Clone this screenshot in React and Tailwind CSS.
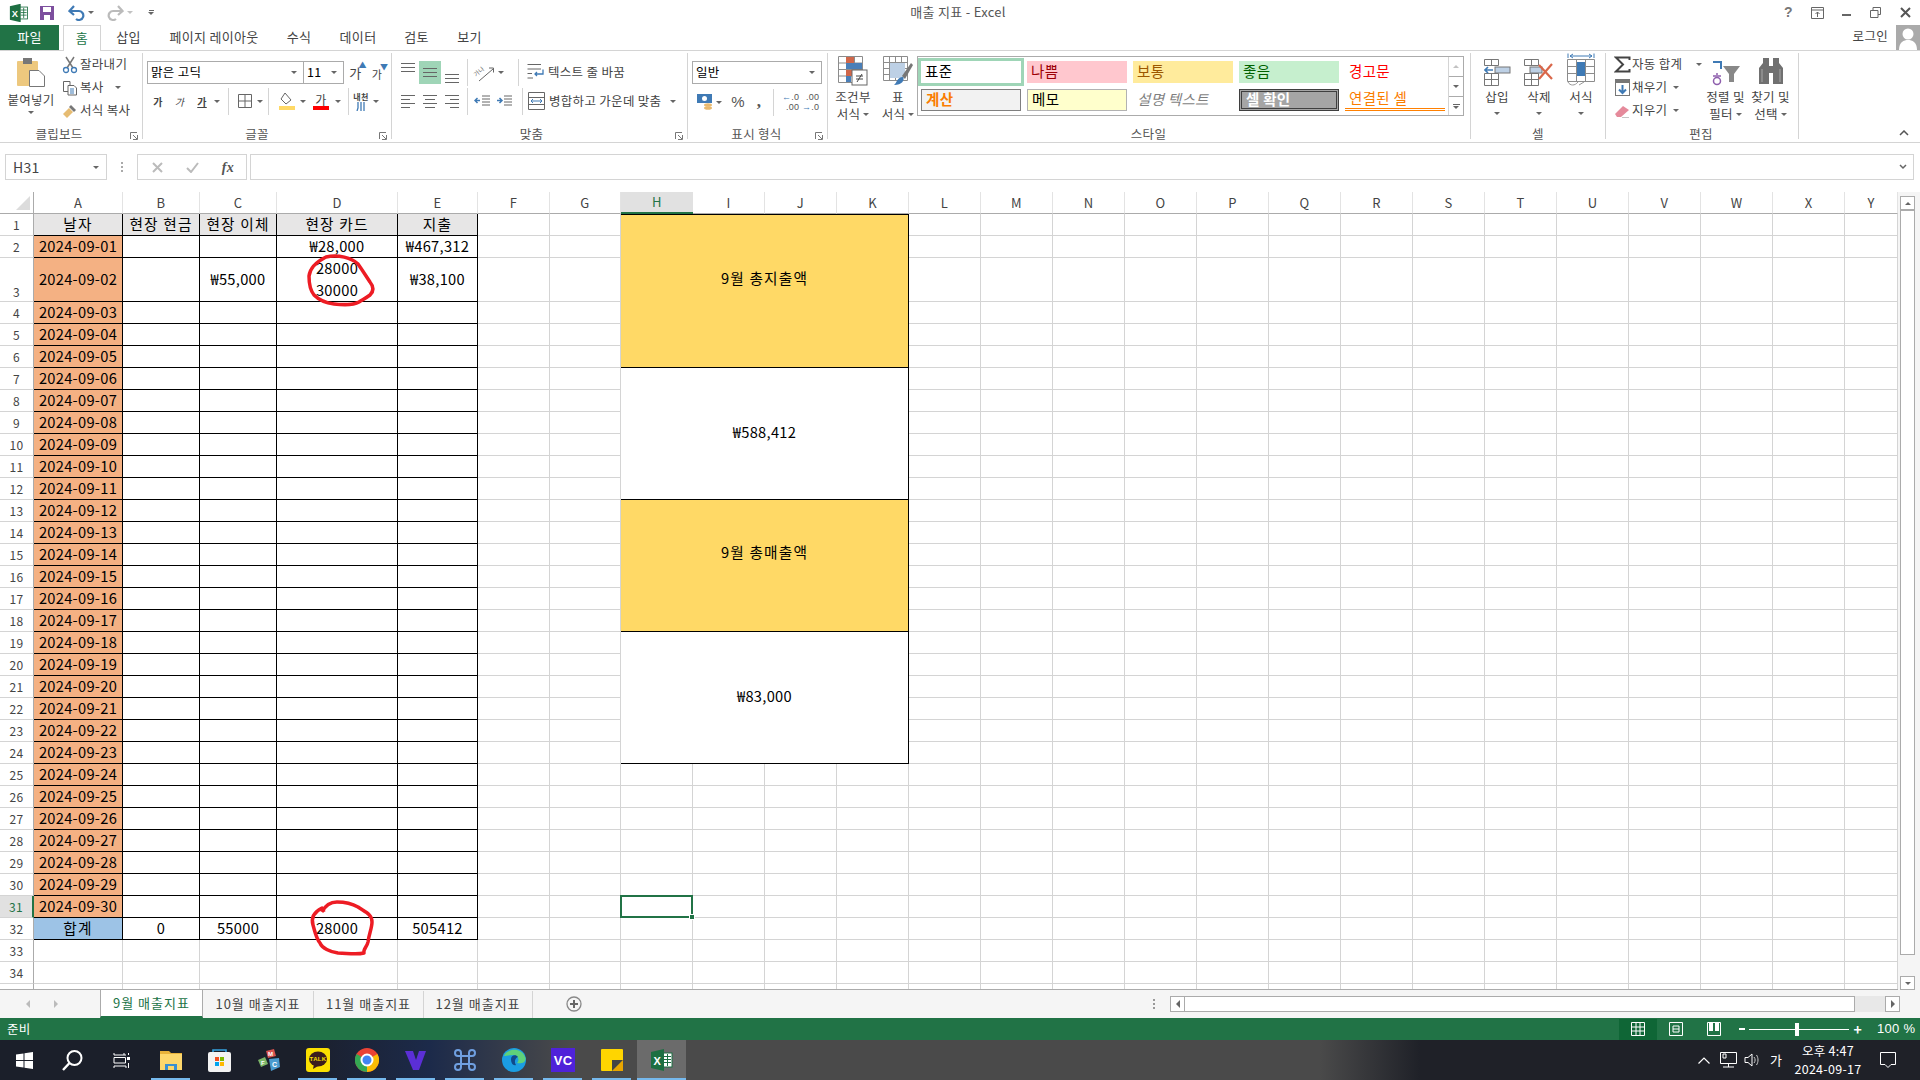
const BASE = "font-['Noto_Sans_CJK_KR','Noto_Sans',sans-serif] tracking-[.3px]";

function S({ w, h, children, className = "" }) {
  return (
    <svg width={w} height={h} viewBox={`0 0 ${w} ${h}`} className={`shrink-0 ${className}`}>
      {children}
    </svg>
  );
}

function Tri({ className = "" }) {
  return <span className={`inline-block h-0 w-0 shrink-0 border-x-[3px] border-t-[3px] border-x-transparent border-t-[#666] ${className}`} />;
}

function ExcelLogo() {
  return (
    <S w={22} h={22}>
      <rect x={10} y={4} width={11} height={14} fill="#fff" stroke="#1d6f42" />
      <path d="M13 7.5h7M13 10.5h7M13 13.5h7M16.5 5v12" stroke="#1d6f42" strokeWidth="1" />
      <path d="M0 3L13 0V22L0 19Z" fill="#1d6f42" />
      <text x="2.5" y="15.5" fontSize="11" fontWeight="700" fill="#fff" fontFamily="Liberation Sans">X</text>
    </S>
  );
}

function Sep({ className = "" }) {
  return <span className={`h-[27px] w-px shrink-0 bg-[#d4d4d4] ${className}`} />;
}

function Group({ width, label, launcher, children, bodyClass = "" }) {
  return (
    <div className={`relative flex h-[86px] shrink-0 flex-col border-r border-[#d4d4d4] ${width}`}>
      <div className={`h-[73px] shrink-0 ${bodyClass}`}>{children}</div>
      <div className="mt-[2px] h-[12px] shrink-0 text-center text-[12.5px] leading-[12px] text-[#555]">{label}</div>
      {launcher ? (
        <svg width="8" height="8" viewBox="0 0 8 8" className="absolute bottom-[-1px] right-[4px]">
          <path d="M0.5 7V.5H7M7.5 3V7.5H3M3 3L7 7" stroke="#777" fill="none" />
        </svg>
      ) : null}
    </div>
  );
}

function LargeBtn({ icon, lines, arrowBelow, width = "w-[42px]" }) {
  return (
    <div className={`flex shrink-0 flex-col items-center ${width}`}>
      <div className="flex h-[33px] shrink-0 items-end justify-center">{icon}</div>
      <div className="mt-[3px] flex h-[17px] shrink-0 items-center whitespace-nowrap text-[12.5px] text-[#444]">{lines[0]}</div>
      {lines[1] ? (
        <div className="flex h-[17px] shrink-0 items-center gap-[3px] whitespace-nowrap text-[12.5px] text-[#444]">
          {lines[1]} <Tri />
        </div>
      ) : null}
      {arrowBelow ? <div className="mt-[6px] flex h-[3px] shrink-0"><Tri /></div> : null}
    </div>
  );
}

function SmallRow({ icon, label, arrow, textClass = "w-[48px]" }) {
  return (
    <div className="flex h-[23px] items-center whitespace-nowrap text-[12.5px] text-[#444]">
      <span className="flex w-[20px] shrink-0 justify-center">{icon}</span>
      <span className={textClass}>{label}</span>
      {arrow ? <Tri className={arrow} /> : null}
    </div>
  );
}

function HLines({ rows, y0, gap, h = 20 }) {
  return (
    <S w={18} h={h}>
      {rows.map(([x, l], i) => (
        <rect key={i} x={x} y={y0 + i * gap} width={l} height={1} fill="#666" />
      ))}
    </S>
  );
}

const LINES_3 = [[2, 14], [2, 14], [2, 14]];

function ClipboardGroup() {
  return (
    <Group width="w-[143px]" label={<span className="pr-[24px]">클립보드</span>} launcher bodyClass="flex">
      <div className="flex w-[60px] flex-col items-center pl-[2px]">
        <div className="mt-[4px]">
          <S w={30} h={30}>
            <rect x={1} y={4} width={21} height={25} rx={1} fill="#edc87e" />
            <rect x={7} y={1} width={9} height={6} fill="#777" />
            <path d="M13.5 13.5H23L28.5 19V29.5H13.5Z" fill="#fff" stroke="#777" />
          </S>
        </div>
        <div className="mt-[5px] h-[16px] text-[12.5px] leading-[16px] text-[#444]">붙여넣기</div>
        <Tri className="mt-[3px]" />
      </div>
      <div>
        <SmallRow
          label="잘라내기"
          icon={
            <S w={16} h={18}>
              <path d="M4 1L11 12M12 1L5 12" stroke="#777" strokeWidth="1.5" />
              <circle cx="4" cy="14" r="2.5" fill="none" stroke="#3f7ab5" strokeWidth="1.3" />
              <circle cx="12" cy="14" r="2.5" fill="none" stroke="#3f7ab5" strokeWidth="1.3" />
            </S>
          }
        />
        <SmallRow
          label="복사"
          textClass="w-[35px]"
          arrow="ml-0"
          icon={
            <S w={16} h={16}>
              <path d="M1.5 1.5H8V11.5H1.5Z" fill="#fff" stroke="#666" />
              <path d="M6 5.5H12L14.5 8V15H6Z" fill="#fff" stroke="#666" />
              <path d="M8 9H12M8 11H12M8 13H12" stroke="#3f7ab5" />
            </S>
          }
        />
        <SmallRow
          label="서식 복사"
          icon={
            <S w={16} h={16}>
              <path d="M9 2L14 7L12 9L7 4Z" fill="#777" />
              <path d="M7 5L11 9L7 13L5 15L1 11L3 9Z" fill="#e6bc72" />
            </S>
          }
        />
      </div>
    </Group>
  );
}

function FontGroup() {
  return (
    <Group width="w-[249px]" label={<span className="pr-[20px]">글꼴</span>} launcher bodyClass="pl-[4px] pt-[8px]">
      <div className="flex items-center">
        <div className="flex h-[23px] w-[157px] items-center justify-between border border-[#ababab] pl-[3px] pr-[6px] text-[12.5px] text-black">
          맑은 고딕 <Tri />
        </div>
        <div className="flex h-[23px] w-[40px] items-center justify-between border border-l-0 border-[#ababab] pl-[3px] pr-[6px] text-[12.5px] text-black">
          11 <Tri />
        </div>
        <div className="ml-[3px] flex w-[22px] justify-center text-[13px] leading-none text-[#444]">
          가<span className="-ml-[3px] -mt-[5px] text-[8px] text-[#3f7ab5]">▲</span>
        </div>
        <div className="flex w-[22px] justify-center pt-[3px] text-[11px] leading-none text-[#444]">
          가<span className="-ml-[2px] -mt-[6px] text-[8px] text-[#3f7ab5]">▼</span>
        </div>
      </div>
      <div className="mt-[6px] flex h-[22px] items-center text-[#444]">
        <span className="w-[22px] text-center text-[10px] font-bold">가</span>
        <span className="w-[21px] text-center text-[10px] italic">가</span>
        <span className="w-[24px] text-center text-[10px] font-bold underline">가</span>
        <Tri />
        <Sep className="ml-[8px]" />
        <span className="ml-[4px] flex w-[24px] justify-center">
          <S w={14} h={14}>
            <path d="M.5.5H13.5V13.5H.5ZM7 .5V13.5M.5 7H13.5" fill="none" stroke="#666" />
          </S>
        </span>
        <Tri />
        <Sep className="ml-[5px]" />
        <span className="ml-[5px] flex w-[26px] justify-center">
          <S w={16} h={18}>
            <path d="M6 1L12 8L7 12L2 7Z" fill="#fff" stroke="#666" />
            <rect y={14} width={16} height={4} fill="#ffd966" />
          </S>
        </span>
        <Tri />
        <span className="ml-[3px] flex w-[24px] flex-col items-center text-[12px] leading-[13px]">
          가<span className="h-[4px] w-[16px] bg-[#ff0000]" />
        </span>
        <Tri className="ml-[2px]" />
        <Sep className="ml-[7px]" />
        <span className="flex w-[24px] flex-col items-center text-[8px] font-bold leading-[10px]">
          내천
          <S w={10} h={9}>
            <path d="M2 0V6L1 9M5 0V9M8 0V9" stroke="#3f7ab5" strokeWidth="1.3" fill="none" />
          </S>
        </span>
        <Tri />
      </div>
    </Group>
  );
}

function AlignGroup() {
  return (
    <Group width="w-[296px]" label={<span className="pr-[16px]">맞춤</span>} launcher bodyClass="pl-[4px] pt-[8px]">
      <div className="flex h-[23px] items-center">
        <span className="flex h-[23px] w-[23px] justify-center"><HLines rows={LINES_3} y0={2} gap={4} h={23} /></span>
        <span className="flex h-[23px] w-[22px] justify-center bg-[#9fd5b7]"><HLines rows={LINES_3} y0={7} gap={4} h={23} /></span>
        <span className="flex h-[23px] w-[22px] justify-center"><HLines rows={LINES_3} y0={13} gap={4} h={23} /></span>
        <Sep className="ml-[4px]" />
        <span className="ml-[4px] flex w-[24px] justify-center">
          <S w={22} h={20}>
            <text x="3" y="14" fontSize="6" fill="#666" transform="rotate(-40 3 14)" fontFamily="Noto Sans CJK KR">가나</text>
            <path d="M6 18L20 6M16 5H20.500V9.500" fill="none" stroke="#666" />
          </S>
        </span>
        <Tri className="ml-[2px]" />
        <Sep className="ml-[14px]" />
        <span className="ml-[6px] flex w-[20px] justify-center">
          <S w={17} h={17}>
            <path d="M.5.5H14M.5 5H14M.5 9.5H5M.5 14H6" stroke="#666" fill="none" />
            <path d="M16 5.5V10H8M10 8L8 10L10 12" stroke="#3f7ab5" fill="none" strokeWidth="1.3" />
          </S>
        </span>
        <span className="ml-[3px] whitespace-nowrap text-[12.5px] text-[#444]">텍스트 줄 바꿈</span>
      </div>
      <div className="mt-[6px] flex h-[22px] items-center">
        <span className="flex w-[23px] justify-center"><HLines rows={[[2, 14], [2, 9], [2, 14], [2, 9]]} y0={4} gap={4} /></span>
        <span className="flex w-[22px] justify-center"><HLines rows={[[2, 14], [4, 10], [2, 14], [4, 10]]} y0={4} gap={4} /></span>
        <span className="flex w-[22px] justify-center"><HLines rows={[[2, 14], [7, 9], [2, 14], [7, 9]]} y0={4} gap={4} /></span>
        <Sep className="ml-[4px]" />
        <span className="ml-[4px] flex w-[20px] justify-center">
          <S w={16} h={14}>
            <path d="M8 2H16M8 5H16M8 8H16M8 11H16" stroke="#666" />
            <path d="M6 6.5H1M3.5 4L1 6.5L3.5 9" stroke="#3f7ab5" strokeWidth="1.5" fill="none" />
          </S>
        </span>
        <span className="ml-[2px] flex w-[20px] justify-center">
          <S w={16} h={14}>
            <path d="M8 2H16M8 5H16M8 8H16M8 11H16" stroke="#666" />
            <path d="M1 6.5H6M3.5 4L6 6.5L3.5 9" stroke="#3f7ab5" strokeWidth="1.5" fill="none" />
          </S>
        </span>
        <Sep className="ml-[8px]" />
        <span className="ml-[3px] flex w-[20px] justify-center">
          <S w={17} h={18}>
            <path d="M.5.5H16.5V17.5H.5ZM.5 5.5H16.5M.5 12.5H16.5" stroke="#666" fill="none" />
            <path d="M3 9H14M5 7L3 9L5 11M12 7L14 9L12 11" stroke="#3f7ab5" fill="none" />
          </S>
        </span>
        <span className="ml-[3px] whitespace-nowrap text-[12.5px] text-[#444]">병합하고 가운데 맞춤</span>
        <Tri className="ml-[9px]" />
      </div>
    </Group>
  );
}

function NumberGroup() {
  return (
    <Group width="w-[140px]" label={<span className="pr-[2px]">표시 형식</span>} launcher bodyClass="pl-[4px] pt-[8px]">
      <div className="flex h-[23px] w-[130px] items-center justify-between border border-[#ababab] pl-[3px] pr-[6px] text-[12.5px] text-black">
        일반 <Tri />
      </div>
      <div className="mt-[7px] flex h-[22px] items-center">
        <span className="ml-[3px] flex w-[18px] justify-center">
          <S w={17} h={19}>
            <rect x={1} y={1} width={15} height={9} fill="#3f7ab5" />
            <circle cx="8.5" cy="5.5" r="2.5" fill="#fff" />
            <ellipse cx="12" cy="12" rx="4" ry="1.8" fill="#e9b96e" />
            <ellipse cx="12" cy="15" rx="4" ry="1.8" fill="#e9b96e" />
          </S>
        </span>
        <Tri className="ml-[3px]" />
        <span className="ml-[5px] w-[22px] text-center font-['Liberation_Sans',sans-serif] text-[15px] text-[#555]">%</span>
        <span className="w-[20px] text-center font-['Liberation_Serif',serif] text-[17px] font-bold leading-[14px] text-[#555]">,</span>
        <Sep className="ml-[4px]" />
        <span className="ml-[3px] flex w-[22px] flex-col font-['Liberation_Sans',sans-serif] text-[9px] leading-[10px] text-[#555]">
          <span className="pl-[5px]"><span className="text-[#3f7ab5]">←</span>.0</span>
          <span className="pl-[9px]">.00</span>
        </span>
        <span className="flex w-[22px] flex-col font-['Liberation_Sans',sans-serif] text-[9px] leading-[10px] text-[#555]">
          <span className="pl-[7px]">.00</span>
          <span className="pl-[3px]"><span className="text-[#3f7ab5]">→</span>.0</span>
        </span>
      </div>
    </Group>
  );
}

function StylesGroup() {
  const cell = "flex items-center pb-[2px] pl-[4px] text-[14.5px] whitespace-nowrap";
  return (
    <Group width="w-[643px]" label={<span className="pr-[1px]">스타일</span>} bodyClass="flex">
      <div className="flex w-[90px] shrink-0 pl-[2px]">
        <LargeBtn
          width="w-[46px]"
          lines={["조건부", "서식"]}
          icon={
            <S w={30} h={30}>
              <path d="M.5 .5H24.5V26.5H.5ZM8.5.5V26.5M16.5.5V26.5M.5 7H24.5M.5 13.5H24.5M.5 20H24.5" stroke="#8c8c8c" fill="none" />
              <rect x={8} y={1} width={8} height={6} fill="#d0674a" />
              <rect x={8} y={7} width={16} height={6} fill="#4a7fb8" />
              <rect x={8} y={14} width={8} height={6} fill="#d0674a" />
              <rect x={8} y={20} width={5} height={6} fill="#4a7fb8" />
              <rect x={14} y={14} width={15} height={15} fill="#fff" stroke="#666" />
              <path d="M18 20H25M18 23H25M24 18L19 26" stroke="#444" />
            </S>
          }
        />
        <LargeBtn
          width="w-[44px]"
          lines={["표", "서식"]}
          icon={
            <S w={30} h={30}>
              <path d="M.5 .5H24.5V24.5H.5ZM6.5.5V24.5M12.5.5V24.5M18.5.5V24.5M.5 6.5H24.5M.5 12.5H24.5M.5 18.5H24.5" stroke="#8c8c8c" fill="none" />
              <rect x={7} y={7} width={15} height={15} fill="#bdd0e5" />
              <path d="M19 20L28 7L30 9L22 23Z" fill="#777" />
              <path d="M20 21C22 24 19 29 11 29C14 27 14 21 20 21Z" fill="#3f7ab5" />
            </S>
          }
        />
      </div>
      <div className="ml-[-1px] mt-[3px] flex h-[60px] w-[547px] border border-[#ababab]">
        <div className="grid flex-1 grid-cols-[100px_100px_100px_100px_100px] grid-rows-[22px_22px] gap-x-[6px] gap-y-[6px] pl-[3px] pt-[4px]">
          <div className={`${cell} text-black outline-[3px] outline-[#9fd5b7]`}>표준</div>
          <div className={`${cell} bg-[#ffc7ce] text-[#9c0006]`}>나쁨</div>
          <div className={`${cell} bg-[#ffeb9c] text-[#9c5700]`}>보통</div>
          <div className={`${cell} bg-[#c6efce] text-[#006100]`}>좋음</div>
          <div className={`${cell} text-[#ff0000]`}>경고문</div>
          <div className={`${cell} border border-[#7f7f7f] bg-[#f2f2f2] font-bold text-[#fa7d00]`}>계산</div>
          <div className={`${cell} border border-[#b2b2b2] bg-[#ffffcc] text-black`}>메모</div>
          <div className={`${cell} italic text-[#7f7f7f]`}>설명 텍스트</div>
          <div className={`${cell} border-[3px] border-double border-[#3f3f3f] bg-[#a5a5a5] font-bold text-white`}>셀 확인</div>
          <div className={`${cell} border-b-[3px] border-double border-[#ff8001] text-[#fa7d00]`}>연결된 셀</div>
        </div>
        <div className="flex w-[15px] shrink-0 flex-col border-l border-[#d4d4d4]">
          <div className="flex h-[20px] items-center justify-center border-b border-[#ababab]">
            <Tri className="rotate-180 opacity-40" />
          </div>
          <div className="flex h-[20px] items-center justify-center border-b border-[#ababab]"><Tri /></div>
          <div className="flex flex-1 flex-col items-center justify-center gap-[1px]">
            <span className="h-px w-[7px] bg-[#666]" />
            <Tri />
          </div>
        </div>
      </div>
    </Group>
  );
}

function CellsGroup() {
  return (
    <Group width="w-[135px]" label="셀" bodyClass="flex pl-[5px]">
      <LargeBtn
        lines={["삽입"]}
        arrowBelow
        icon={
          <S w={27} h={27}>
            <path d="M.5.5H14.5V6.5H.5ZM7.5.5V6.5M.5 14.5H14.5V26.5H.5ZM7.5 14.5V26.5M.5 20.5H14.5" stroke="#777" fill="none" />
            <rect x={11} y={8} width={15} height={6} fill="#bdd0e5" stroke="#777" />
            <path d="M9 11H1M4 8L1 11L4 14" stroke="#3f7ab5" strokeWidth="1.6" fill="none" />
          </S>
        }
      />
      <LargeBtn
        lines={["삭제"]}
        arrowBelow
        icon={
          <S w={30} h={27}>
            <path d="M.5.5H14.5V6.5H.5ZM7.5.5V6.5M.5 14.5H14.5V26.5H.5ZM7.5 14.5V26.5M.5 20.5H14.5" stroke="#777" fill="none" />
            <rect x={6} y={8} width={12} height={6} fill="#bdd0e5" stroke="#777" />
            <path d="M15 6L28 20M28 5L15 20" stroke="#d9674a" strokeWidth="2.2" />
          </S>
        }
      />
      <LargeBtn
        lines={["서식"]}
        arrowBelow
        icon={
          <S w={28} h={33}>
            <path d="M1 .5V5M27 .5V5M3 3H25M6 1L3 3L6 5M22 1L25 3L22 5" stroke="#3f7ab5" fill="none" />
            <path d="M.5 6.5H27.5V28.5H.5ZM9.5 6.5V28.5M18.5 6.5V28.5M.5 13.5H27.5M.5 20.5H27.5" stroke="#8c8c8c" fill="none" />
            <rect x={10} y={9} width={8} height={14} fill="#3f7ab5" />
            <path d="M1 29C3 33 8 33 11 29M12 32L17 29" stroke="#999" fill="none" />
          </S>
        }
      />
    </Group>
  );
}

function EditGroup() {
  return (
    <Group width="w-[193px]" label={<span className="pr-[2px]">편집</span>} bodyClass="flex pl-[6px]">
      <div className="w-[93px] shrink-0">
        <SmallRow
          label="자동 합계"
          textClass="w-[64px]"
          arrow="ml-0"
          icon={
            <S w={17} h={17}>
              <path d="M15.5 4V1.5H2L9 8.5L2 15.5H15.5V13" stroke="#444" strokeWidth="2" fill="none" />
            </S>
          }
        />
        <SmallRow
          label="채우기"
          textClass="w-[41px]"
          arrow="ml-0"
          icon={
            <S w={15} h={17}>
              <rect x={.5} y={.5} width={14} height={16} fill="#fff" stroke="#777" />
              <rect x={1} y={1} width={13} height={3} fill="#777" />
              <path d="M7.5 6V14M4 10.5L7.5 14L11 10.5" stroke="#3f7ab5" strokeWidth="2" fill="none" />
            </S>
          }
        />
        <SmallRow
          label="지우기"
          textClass="w-[41px]"
          arrow="ml-0"
          icon={
            <S w={16} h={14}>
              <path d="M1 10L9 2L15 6L7 13H3Z" fill="#e58a9b" />
              <path d="M8 14H15" stroke="#888" />
            </S>
          }
        />
      </div>
      <div className="-ml-[2px] flex">
        <LargeBtn
          width="w-[45px]"
          lines={["정렬 및", "필터"]}
          icon={
            <S w={30} h={26}>
              <path d="M2 2H10V9" stroke="#3f7ab5" strokeWidth="2" fill="none" />
              <path d="M6 13V15M2 16H10" stroke="#8e5fad" strokeWidth="1.5" />
              <circle cx="6" cy="21" r="3.5" fill="none" stroke="#8e5fad" strokeWidth="1.5" />
              <path d="M12 6H29L23 14V22H18V14Z" fill="#888" />
            </S>
          }
        />
        <LargeBtn
          width="w-[45px]"
          lines={["찾기 및", "선택"]}
          icon={
            <S w={26} h={29}>
              <path d="M5 1H11V27H1L1 11L5 6ZM21 1H15V27H25V11L21 6Z" fill="#707070" />
              <rect x={11} y={9} width={4} height={7} fill="#707070" />
              <path d="M4 12V25M22 12V25" stroke="#a8a8a8" />
            </S>
          }
        />
      </div>
    </Group>
  );
}

function TopBar() {
  return (
    <div className="flex h-[25px] shrink-0 items-center">
      <div className="flex w-[240px] items-center">
        <span className="ml-[8px] scale-[.85]"><ExcelLogo /></span>
        <span className="ml-[9px]">
          <S w={16} h={16}>
            <path d="M1 1H15V15H1Z" fill="#7d4f9e" />
            <rect x={4} y={2} width={8} height={5} fill="#fff" />
            <rect x={5} y={10} width={6} height={5} fill="#fff" />
          </S>
        </span>
        <span className="ml-[13px]">
          <S w={17} h={16}>
            <path d="M2 6H10.5A4.5 4.5 0 1 1 8 14M6 1L1.5 6L6 10" stroke="#3f7ab5" strokeWidth="2.2" fill="none" />
          </S>
        </span>
        <Tri className="ml-[3px]" />
        <span className="ml-[13px]">
          <S w={17} h={16}>
            <path d="M15 6H6.5A4.5 4.5 0 1 0 9 14M11 1L15.5 6L11 10" stroke="#bbb" strokeWidth="2.2" fill="none" />
          </S>
        </span>
        <Tri className="ml-[3px] opacity-40" />
        <span className="ml-[15px] flex flex-col items-center gap-[1px]">
          <span className="h-px w-[5px] bg-[#666]" />
          <Tri />
        </span>
      </div>
      <div className="flex-1 pb-[2px] pr-[4px] text-center text-[13px] text-[#555]">매출 지표 - Excel</div>
      <div className="flex w-[240px] items-center justify-end">
        <span className="w-[29px] text-center font-['Liberation_Sans',sans-serif] text-[14px] font-bold text-[#777]">?</span>
        <span className="flex w-[29px] justify-center">
          <S w={13} h={12}>
            <path d="M.5.5H12.5V11.5H.5ZM.5 3H12.5M6.5 10V5M4.5 7L6.5 5L8.5 7" stroke="#666" fill="none" />
          </S>
        </span>
        <span className="flex w-[29px] justify-center"><span className="mt-[4px] h-[2px] w-[9px] bg-[#666]" /></span>
        <span className="flex w-[29px] justify-center">
          <S w={11} h={11}>
            <path d="M3 3V.5H10.5V7.5H8M.5 3.5H8V10.5H.5Z" stroke="#666" fill="none" />
          </S>
        </span>
        <span className="flex w-[30px] justify-center">
          <S w={11} h={11}>
            <path d="M1 1L10 10M10 1L1 10" stroke="#555" strokeWidth="2" />
          </S>
        </span>
      </div>
    </div>
  );
}

function TabRow() {
  const tabs = [
    ["삽입", "w-[55px]"],
    ["페이지 레이아웃", "w-[116px]"],
    ["수식", "w-[54px]"],
    ["데이터", "w-[64px]"],
    ["검토", "w-[53px]"],
    ["보기", "w-[53px]"],
  ];
  return (
    <div className="relative z-10 flex h-[25px] shrink-0 text-[13px] text-[#444]">
      <div className="flex h-[25px] w-[59px] items-center justify-center bg-[#217346] pb-[2px] text-white">파일</div>
      <div className="ml-[4px] flex h-[26px] w-[38px] items-center justify-center border-x border-t border-[#d4d4d4] bg-white pb-[2px] text-[#217346]">홈</div>
      {tabs.map(([name, w]) => (
        <div key={name} className={`flex items-center justify-center pb-[2px] ${w}`}>{name}</div>
      ))}
      <div className="ml-auto flex items-center">
        <span className="mr-[8px] pb-[2px] text-[12.5px]">로그인</span>
        <span className="h-[25px] w-[24px] overflow-hidden bg-[#aaa]">
          <S w={24} h={25}>
            <circle cx="12" cy="9" r="5.5" fill="#fff" />
            <path d="M3 25C3 17 8 15 12 15C16 15 21 17 21 25Z" fill="#fff" />
          </S>
        </span>
      </div>
    </div>
  );
}

function FormulaBar() {
  return (
    <div className="ml-[5px] mt-[11px] flex h-[26px] shrink-0 items-stretch">
      <div className="flex w-[102px] items-center justify-between border border-[#d4d4d4] pl-[7px] pr-[7px] text-[14px] text-[#444]">
        H31 <Tri />
      </div>
      <div className="flex w-[30px] flex-col items-center justify-center gap-[2px]">
        <span className="h-[2px] w-[2px] bg-[#aaa]" />
        <span className="h-[2px] w-[2px] bg-[#aaa]" />
        <span className="h-[2px] w-[2px] bg-[#aaa]" />
      </div>
      <div className="flex w-[110px] items-center border border-[#d4d4d4]">
        <span className="flex w-[36px] justify-center pl-[2px]">
          <S w={11} h={11}><path d="M1 1L10 10M10 1L1 10" stroke="#bbb" strokeWidth="2" /></S>
        </span>
        <span className="flex w-[36px] justify-center">
          <S w={13} h={11}><path d="M1 6L5 10L12 1" stroke="#bbb" strokeWidth="2" fill="none" /></S>
        </span>
        <span className="w-[36px] text-center font-['Liberation_Serif',serif] text-[14px] font-bold italic text-[#555]">fx</span>
      </div>
      <div className="ml-[3px] flex w-[1664px] items-center justify-end border border-[#d4d4d4] pr-[6px]">
        <S w={8} h={6}><path d="M1 1L4 4L7 1" stroke="#666" strokeWidth="1.5" fill="none" /></S>
      </div>
    </div>
  );
}

const COLS = "ABCDEFGHIJKLMNOPQRSTUVWXY".split("");
const DATA = {
  2: { D: "₩28,000", E: "₩467,312" },
  3: { C: "₩55,000", D: "28000\n30000", E: "₩38,100" },
  32: { B: "0", C: "55000", D: "28000", E: "505412" },
};
const HEADERS = { A: "날자", B: "현장 현금", C: "현장 이체", D: "현장 카드", E: "지출" };
const TALL = { 3: true };

function rowHeaderClass(r) {
  const base = "flex justify-center border-r border-b text-[12px] text-[#444]";
  if (r === 31) return `${base} items-center border-b-[#d4d4d4] border-r-2 border-r-[#217346] bg-[#e1e1e1] text-[#217346]`;
  if (TALL[r]) return `${base} items-end border-[#d4d4d4] border-r-[#ababab]`;
  return `${base} items-center border-[#d4d4d4] border-r-[#ababab]`;
}

function dataCell(r, col) {
  const inTable = "ABCDE".includes(col) && r <= 32;
  const line = inTable ? "border-black" : "border-[#d4d4d4]";
  let fill = "";
  let text = DATA[r]?.[col] ?? "";
  if (r === 1 && HEADERS[col]) {
    fill = "bg-[#e7e6e6] tracking-[1.2px]";
    text = HEADERS[col];
  } else if (col === "A" && r >= 2 && r <= 31) {
    fill = "bg-[#f4b183]";
    text = `2024-09-${String(r - 1).padStart(2, "0")}`;
  } else if (col === "A" && r === 32) {
    fill = "bg-[#9dc3e6] tracking-[1.2px]";
    text = "합계";
  }
  return (
    <div
      key={`${col}${r}`}
      className={`flex items-center justify-center overflow-hidden whitespace-pre-line border-r border-b pb-[2px] text-center text-[14.67px] leading-[22px] text-black ${line} ${fill}`}
    >
      {text}
    </div>
  );
}

function Sheet() {
  const rows = Array.from({ length: 35 }, (_, i) => i + 1);
  const merged = "col-[9/13] -ml-px flex items-center justify-center border border-black text-[14.67px] text-black";
  return (
    <div className="relative grid h-[798px] w-[1898px] shrink-0 grid-cols-[34px_89px_77px_77px_121px_80px_72px_71px_repeat(17,72px)_53px] grid-rows-[22px_22px_22px_44px_repeat(31,22px)_6px] overflow-hidden border-b border-[#ababab]">
      <div className="flex items-end justify-end border-r border-b border-[#ababab] pb-[3px] pr-[3px]">
        <S w={14} h={14}><path d="M14 0V14H0Z" fill="#dcdcdc" /></S>
      </div>
      {COLS.map((c) => (
        <div
          key={c}
          className={
            c === "H"
              ? "flex items-center justify-center border-b-2 border-b-[#217346] bg-[#e1e1e1] text-[13px] text-[#217346]"
              : "flex items-center justify-center border-r border-b border-r-[#e3e3e3] border-b-[#ababab] text-[13px] text-[#444]"
          }
        >
          {c}
        </div>
      ))}

      <div className={`${merged} row-[2/8] bg-[#ffd966] pb-[27px] tracking-[1.2px]`}>9월 총지출액</div>
      <div className={`${merged} row-[8/14] -mt-px pb-[3px]`}>₩588,412</div>
      <div className={`${merged} row-[14/20] -mt-px bg-[#ffd966] pb-[27px] tracking-[1.2px]`}>9월 총매출액</div>
      <div className={`${merged} row-[20/26] -mt-px pb-[3px]`}>₩83,000</div>

      {rows.map((r) => (
        <div key={r} className="contents">
          <div className={rowHeaderClass(r)}>{r < 35 ? r : ""}</div>
          {COLS.filter((c) => !("HIJK".includes(c) && r <= 24)).map((c) =>
            c === "H" && r === 31 ? (
              <div key="sel" className="relative -ml-px -mt-px border-2 border-[#217346]">
                <span className="absolute -bottom-[4px] -right-[4px] h-[6px] w-[6px] border border-white bg-[#217346]" />
              </div>
            ) : (
              dataCell(r, c)
            )
          )}
        </div>
      ))}

      <svg width="1898" height="798" viewBox="0 0 1898 798" className="pointer-events-none absolute inset-0">
        <path
          d="M326 65C338 62 352 66 358 72C363 79 366 84 370 90C374 95 374 99 370 103C366 106 362 108 359 110C354 113 342 113 334 112C326 111 318 107 314 103C310 98 309 91 309 84C310 76 316 70 326 65Z"
          fill="none"
          stroke="#ed1c24"
          strokeWidth="3.5"
          strokeLinejoin="round"
        />
        <path
          d="M322 720C325 714 330 710 337 710C345 710 351 711 358 715C365 720 372 722 372 730C372 736 369 742 368 750C367 755 363 757 364 761C356 763 346 761 338 761C330 760 322 756 320 751C316 746 315 740 313 733C311 726 314 720 322 716L324 720"
          fill="none"
          stroke="#ed1c24"
          strokeWidth="3.5"
          strokeLinejoin="round"
        />
      </svg>
    </div>
  );
}

function VScroll() {
  return (
    <div className="flex h-[798px] w-[22px] shrink-0 flex-col items-center bg-[#f5f5f5] pr-[3px]">
      <div className="mt-[4px] flex h-[14px] w-[15px] items-center justify-center border border-[#ababab] bg-white">
        <Tri className="rotate-180" />
      </div>
      <div className="h-[745px] w-[15px] border border-[#ababab] bg-white" />
      <div className="mt-[21px] flex h-[14px] w-[15px] items-center justify-center border border-[#ababab] bg-white">
        <Tri />
      </div>
    </div>
  );
}

function SheetTabs() {
  const sideArrow = "h-0 w-0 border-y-[4px] border-y-transparent";
  return (
    <div className="flex h-[28px] shrink-0 items-center bg-[#f5f5f5] text-[13px] tracking-[1px] text-[#444]">
      <div className="flex w-[100px] items-center pl-[26px]">
        <span className={`${sideArrow} border-r-[4px] border-r-[#bbb]`} />
        <span className={`${sideArrow} ml-[24px] border-l-[4px] border-l-[#bbb]`} />
      </div>
      <div className="flex h-[28px] w-[103px] items-center justify-center border-x border-b-2 border-x-[#ababab] border-b-[#217346] bg-white text-[#217346]">9월 매출지표</div>
      <div className="flex w-[110px] justify-center">10월 매출지표</div>
      <Sep className="h-[24px]" />
      <div className="flex w-[109px] justify-center">11월 매출지표</div>
      <Sep className="h-[24px]" />
      <div className="flex w-[108px] justify-center">12월 매출지표</div>
      <Sep className="h-[24px]" />
      <span className="ml-[33px]">
        <S w={16} h={16}>
          <circle cx="8" cy="8" r="7" fill="none" stroke="#888" strokeWidth="1.3" />
          <path d="M8 4V12M4 8H12" stroke="#666" strokeWidth="2" />
        </S>
      </span>
      <div className="ml-[571px] flex flex-col gap-[2px]">
        <span className="h-[2px] w-[2px] bg-[#999]" />
        <span className="h-[2px] w-[2px] bg-[#999]" />
        <span className="h-[2px] w-[2px] bg-[#999]" />
      </div>
      <div className="ml-[15px] flex h-[16px] items-stretch">
        <div className="flex w-[15px] items-center justify-center border border-[#ababab] bg-white">
          <span className={`${sideArrow} border-r-[4px] border-r-[#666]`} />
        </div>
        <div className="-ml-px w-[671px] border border-[#ababab] bg-white" />
        <div className="w-[30px] bg-[#e8e8e8]" />
        <div className="flex w-[15px] items-center justify-center border border-[#ababab] bg-white">
          <span className={`${sideArrow} border-l-[4px] border-l-[#666]`} />
        </div>
      </div>
    </div>
  );
}

function StatusBar() {
  return (
    <div className="flex h-[22px] shrink-0 items-center bg-[#217346] text-[12.5px] text-white">
      <span className="pl-[7px]">준비</span>
      <div className="ml-auto flex h-[22px] items-center">
        <span className="flex h-[21px] w-[38px] items-center justify-center bg-[#0f6636]">
          <S w={14} h={14}><path d="M.5.5H13.5V13.5H.5ZM5 .5V13.5M9 .5V13.5M.5 5H13.5M.5 9H13.5" stroke="#fff" fill="none" /></S>
        </span>
        <span className="flex w-[38px] justify-center">
          <S w={14} h={14}><path d="M.5.5H13.5V13.5H.5ZM4 4H10V10H4ZM4 7H10" stroke="#fff" fill="none" /></S>
        </span>
        <span className="flex w-[38px] justify-center">
          <S w={14} h={14}>
            <path d="M.5.5H13.5V13.5H.5Z" stroke="#fff" fill="none" />
            <rect x={2} y={1} width={4} height={8} fill="#fff" />
            <rect x={8} y={1} width={4} height={8} fill="#fff" />
          </S>
        </span>
        <span className="ml-[6px] h-[2px] w-[6px] bg-white" />
        <div className="relative ml-[4px] h-px w-[100px] bg-white">
          <span className="absolute -top-[6px] left-[46px] h-[13px] w-[4px] bg-white" />
        </div>
        <span className="ml-[4px] text-[14px] font-bold leading-none">+</span>
        <span className="ml-[15px] w-[43px] font-['Liberation_Sans',sans-serif] text-[13px]">100 %</span>
      </div>
    </div>
  );
}

function TaskCell({ running, active, children }) {
  return (
    <div className={`relative flex h-[40px] w-[49px] shrink-0 items-center justify-center ${active ? "bg-[#6b6b6b]" : ""}`}>
      {children}
      {running ? <span className={`absolute bottom-0 h-[2px] bg-[#76b9ed] ${active ? "inset-x-0" : "inset-x-[5px]"}`} /> : null}
    </div>
  );
}

function Taskbar() {
  return (
    <div className="flex h-[40px] shrink-0 items-center bg-[linear-gradient(90deg,#1b1f2a_0px,#1b1f2a_300px,#1c2a4a_430px,#4a4a4a_570px,#4a4a4a_1320px,#1f2128_1420px,#1f2128_100%)]">
      <div className="flex w-[48px] justify-center">
        <S w={17} h={17}><path d="M0 2.5L7.5 1.4V8H0ZM8.5 1.3L17 0V8H8.5ZM0 9H7.5V15.6L0 14.5ZM8.5 9H17V17L8.5 15.7Z" fill="#fff" /></S>
      </div>
      <div className="flex w-[49px] justify-center">
        <S w={23} h={23}>
          <circle cx="13.5" cy="9" r="7" fill="none" stroke="#fff" strokeWidth="2" />
          <path d="M8.5 14L2 21" stroke="#fff" strokeWidth="2.4" />
        </S>
      </div>
      <div className="flex w-[49px] justify-center">
        <S w={17} h={17}>
          <path d="M1 1V3M11 1V3M1 3H13M1 14H13M1 5.5H12.5V11H1ZM1 16V14M13 16V14" stroke="#fff" fill="none" />
          <rect x={14} y={5} width={3} height={3} fill="#fff" />
          <rect x={15} y={1} width={1} height={2} fill="#fff" />
          <rect x={15} y={11} width={1} height={5} fill="#fff" />
        </S>
      </div>
      <TaskCell running>
        <S w={22} h={20}>
          <path d="M0 1H9L11 3H22V20H0Z" fill="#e8b23a" />
          <rect y={4} width={22} height={16} fill="#fdd76c" />
          <path d="M5 20V14H17V20H14V16H8V20Z" fill="#3a8fd0" />
        </S>
      </TaskCell>
      <TaskCell>
        <S w={23} h={24}>
          <path d="M5 5V2H18V5" stroke="#36a3e0" strokeWidth="1.6" fill="none" />
          <rect y={4} width={23} height={20} rx={2} fill="#f3f3f3" />
          <rect x={7} y={9} width={4} height={4} fill="#f25022" />
          <rect x={12} y={9} width={4} height={4} fill="#7fba00" />
          <rect x={7} y={14} width={4} height={4} fill="#00a4ef" />
          <rect x={12} y={14} width={4} height={4} fill="#ffb900" />
        </S>
      </TaskCell>
      <TaskCell>
        <S w={24} h={24}>
          <path d="M9 3L17 1L19 8L11 10Z" fill="#d9534f" />
          <path d="M1 12L8 9L11 16L4 19Z" fill="#7cb668" />
          <path d="M12 11L22 10L23 19L14 23Z" fill="#4a9bcf" />
          <text x="11" y="8" fontSize="6" fontWeight="700" fill="#fff" fontFamily="Liberation Sans">M</text>
          <text x="4" y="17" fontSize="6" fontWeight="700" fill="#fff" fontFamily="Liberation Sans">F</text>
          <text x="15" y="19" fontSize="7" fontWeight="700" fill="#fff" fontFamily="Liberation Sans">C</text>
        </S>
      </TaskCell>
      <TaskCell running>
        <S w={24} h={24}>
          <rect width={24} height={24} rx={3} fill="#fbe000" />
          <ellipse cx="12" cy="11" rx="9" ry="7.5" fill="#3a1d1d" />
          <path d="M8 16L7 21L12 18Z" fill="#3a1d1d" />
          <text x="12" y="13" textAnchor="middle" fontSize="6" fontWeight="700" fill="#fbe000" fontFamily="Liberation Sans">TALK</text>
        </S>
      </TaskCell>
      <TaskCell running>
        <S w={24} h={24}>
          <circle cx="12" cy="12" r="12" fill="#ea4335" />
          <path d="M12 12L22.4 6A12 12 0 0 1 12 24Z" fill="#fbbc05" />
          <path d="M12 12L12 24A12 12 0 0 1 1.6 6Z" fill="#34a853" />
          <circle cx="12" cy="12" r="5.5" fill="#4285f4" stroke="#fff" strokeWidth="2" />
        </S>
      </TaskCell>
      <TaskCell running>
        <S w={21} h={19}>
          <path d="M0 0H8L11 9L14 0H21L14 19H8Z" fill="#5b2fd6" />
        </S>
      </TaskCell>
      <TaskCell running>
        <S w={22} h={22}>
          <path d="M7 7H15V15H7ZM7 7H4A3 3 0 1 1 7 4ZM15 7V4A3 3 0 1 1 18 7ZM15 15H18A3 3 0 1 1 15 18ZM7 15V18A3 3 0 1 1 4 15Z" fill="none" stroke="#6f9fe0" strokeWidth="2" />
        </S>
      </TaskCell>
      <TaskCell running>
        <S w={24} h={24}>
          <circle cx="12" cy="12" r="12" fill="#1b9de2" />
          <path d="M2 8C5 0 20 -1 23.5 10C24 14 20 16 15 15C18 12 16 7 11 7C7 7 4 8 2 8Z" fill="#5fd17a" />
          <path d="M9 11C9 7 14 6 16 9C13 10 12 14 14 17C11 18 9 15 9 11Z" fill="#114a8b" />
        </S>
      </TaskCell>
      <TaskCell running>
        <S w={24} h={24}>
          <rect width={24} height={24} fill="#4f22d9" />
          <text x="12" y="17" textAnchor="middle" fontSize="13" fontWeight="700" fill="#fff" fontFamily="Liberation Sans">VC</text>
        </S>
      </TaskCell>
      <TaskCell running>
        <S w={22} h={22}>
          <rect width={22} height={22} rx={1} fill="#ffd500" />
          <path d="M22 11V22H11Z" fill="#e8a500" />
          <path d="M11 22V11H22Z" fill="#444" />
        </S>
      </TaskCell>
      <div className="ml-[1px]">
        <TaskCell running active>
          <ExcelLogo />
        </TaskCell>
      </div>

      <div className="ml-auto flex items-center text-white">
        <S w={12} h={7}><path d="M.5 6.5L6 1L11.5 6.5" stroke="#fff" fill="none" strokeWidth="1.2" /></S>
        <span className="ml-[10px]">
          <S w={17} h={16}>
            <path d="M.5.5H16.5V11.5H.5ZM8.5 11.5V15M3 15H14M3 2H6V6H3Z" stroke="#fff" fill="none" />
          </S>
        </span>
        <span className="ml-[7px]">
          <S w={16} h={14}>
            <path d="M1 4.5H4L8 1V13L4 9.5H1Z" stroke="#fff" fill="none" />
            <path d="M10 4C11.5 6 11.5 8 10 10M12.5 2C14.5 5 14.5 9 12.5 12" stroke="#ccc" fill="none" />
          </S>
        </span>
        <span className="ml-[10px] w-[13px] text-[13px]">가</span>
        <div className="ml-[7px] flex w-[76px] flex-col items-center text-[12.5px] leading-[18px]">
          <span>오후 4:47</span>
          <span className="whitespace-nowrap">2024-09-17</span>
        </div>
        <span className="ml-[14px] mr-[24px]">
          <S w={16} h={16}>
            <path d="M.5.5H15.5V12.5H11L8 15.5L5 12.5H.5Z" stroke="#fff" fill="none" />
          </S>
        </span>
      </div>
    </div>
  );
}

export default function App() {
  return (
    <div className={`flex h-[1080px] w-[1920px] flex-col overflow-hidden bg-white ${BASE}`}>
      <TopBar />
      <TabRow />
      <div className="flex h-[93px] shrink-0 border-b border-t border-[#d4d4d4] pt-[2px]">
        <ClipboardGroup />
        <FontGroup />
        <AlignGroup />
        <NumberGroup />
        <StylesGroup />
        <CellsGroup />
        <EditGroup />
        <div className="flex flex-1 items-end justify-end pb-[6px] pr-[11px]">
          <S w={10} h={6}><path d="M1 5L5 1L9 5" stroke="#555" strokeWidth="1.5" fill="none" /></S>
        </div>
      </div>
      <FormulaBar />
      <div className="mt-[12px] flex shrink-0">
        <Sheet />
        <VScroll />
      </div>
      <SheetTabs />
      <StatusBar />
      <Taskbar />
    </div>
  );
}
